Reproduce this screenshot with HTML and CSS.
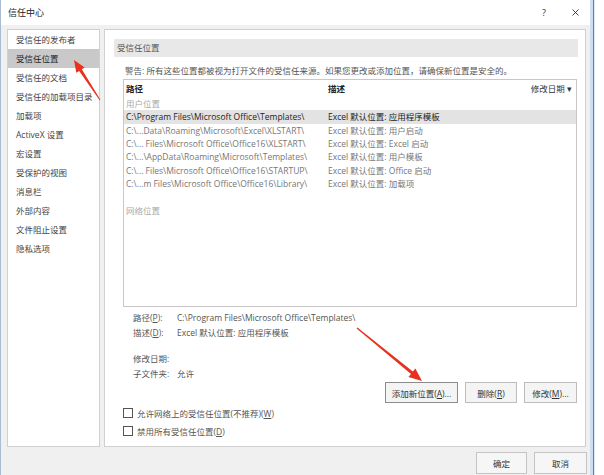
FILE: index.html
```html
<!DOCTYPE html>
<html lang="zh-CN">
<head>
  <meta charset="UTF-8" />
  <title>信任中心</title>
  <link rel="stylesheet" href="styles.css">
</head>
<body>
  <div class="page">
    <div class="dialog">
      <div class="titlebar">
        <span class="title">信任中心</span>
        <span class="help">?</span>
        <svg class="close" width="7" height="7" viewBox="0 0 7 7"><path d="M0.5 0.5L6.5 6.5M6.5 0.5L0.5 6.5" stroke="#333" stroke-width="0.9" fill="none"/></svg>
      </div>

      <div class="body">
        <div class="panes">
          <ul class="nav">
            <li>受信任的发布者</li>
            <li class="active">受信任位置</li>
            <li>受信任的文档</li>
            <li>受信任的加载项目录</li>
            <li>加载项</li>
            <li>ActiveX 设置</li>
            <li>宏设置</li>
            <li>受保护的视图</li>
            <li>消息栏</li>
            <li>外部内容</li>
            <li>文件阻止设置</li>
            <li>隐私选项</li>
          </ul>

          <div class="main">
            <div class="section-head">受信任位置</div>
            <div class="content">
              <p class="warn">警告: 所有这些位置都被视为打开文件的受信任来源。如果您更改或添加位置，请确保新位置是安全的。</p>

              <div class="list">
                <div class="list-head">
                  <span class="col-path">路径</span>
                  <span class="col-desc">描述</span>
                  <span class="col-date">修改日期 ▾</span>
                </div>
                <div class="group">用户位置</div>
                <div class="row selected"><span class="col-path">C:\Program Files\Microsoft Office\Templates\</span><span class="col-desc">Excel 默认位置: 应用程序模板</span></div>
                <div class="row"><span class="col-path">C:\...Data\Roaming\Microsoft\Excel\XLSTART\</span><span class="col-desc">Excel 默认位置: 用户启动</span></div>
                <div class="row"><span class="col-path">C:\... Files\Microsoft Office\Office16\XLSTART\</span><span class="col-desc">Excel 默认位置: Excel 启动</span></div>
                <div class="row"><span class="col-path">C:\...\AppData\Roaming\Microsoft\Templates\</span><span class="col-desc">Excel 默认位置: 用户模板</span></div>
                <div class="row"><span class="col-path">C:\... Files\Microsoft Office\Office16\STARTUP\</span><span class="col-desc">Excel 默认位置: Office 启动</span></div>
                <div class="row"><span class="col-path">C:\...m Files\Microsoft Office\Office16\Library\</span><span class="col-desc">Excel 默认位置: 加载项</span></div>
                <div class="row"></div>
                <div class="group">网络位置</div>
              </div>

              <div class="details">
                <div class="line"><span class="label">路径(<u>P</u>):</span><span>C:\Program Files\Microsoft Office\Templates\</span></div>
                <div class="line"><span class="label">描述(<u>D</u>):</span><span>Excel 默认位置: 应用程序模板</span></div>
                <div class="line spaced"><span class="label">修改日期:</span><span></span></div>
                <div class="line"><span class="label">子文件夹:</span><span>允许</span></div>
              </div>

              <div class="actions">
                <button class="btn primary w-add">添加新位置(<u>A</u>)...</button>
                <button class="btn w-del">删除(<u>R</u>)</button>
                <button class="btn w-mod">修改(<u>M</u>)...</button>
              </div>

              <label class="check"><span class="box"></span><span>允许网络上的受信任位置(不推荐)(<u>W</u>)</span></label>
              <label class="check"><span class="box"></span><span>禁用所有受信任位置(<u>D</u>)</span></label>
            </div>
          </div>
        </div>

        <div class="footer">
          <button class="btn w-ok">确定</button>
          <button class="btn w-cancel">取消</button>
        </div>
      </div>
    </div>
    <div class="edge"></div>
    <div class="rest"></div>

    <!-- red arrows drawn on top of the screenshot -->
    <svg class="marks" width="604" height="475" viewBox="0 0 604 475">
      <polygon fill="#e8321e" points="100.4,99.7 81.8,69.3 84.7,67.4 74,60 76.3,72.8 79.2,71 99.6,100.3"/>
      <polygon fill="#e8321e" points="357.4,327.5 412.85,371.6 415.4,368.5 422,381 408.4,377.1 410.95,374 356.6,328.5"/>
    </svg>
  </div>
</body>
</html>
```

FILE: styles.css
```css
* {
  box-sizing: border-box;
}
body {
  margin: 0;
  font-family: "Open Sans", "Noto Sans CJK SC", sans-serif;
  font-size: 8.5px;
  color: #333;
  background: #fff;
}
.page {
  position: relative;
  display: flex;
  width: 604px;
  height: 475px;
  overflow: hidden;
}
.dialog {
  width: 590px;
  display: flex;
  flex-direction: column;
  border-left: 1px solid #a9bcd2;
}
.titlebar {
  height: 25px;
  flex: none;
  display: flex;
  align-items: center;
  padding: 0 11px 0 7px;
  background: #fff;
}
.title {
  font-size: 9px;
  color: #222;
}
.help {
  margin-left: auto;
  font-size: 9px;
  color: #333;
}
.close {
  margin-left: 26px;
}
.body {
  flex: 1;
  display: flex;
  flex-direction: column;
  background: #f0f0f0;
}
.panes {
  display: flex;
  gap: 4px;
  height: 422px;
  padding: 4px 4px 0 6px;
}
.nav {
  list-style: none;
  margin: 0;
  padding: 0;
  width: 93px;
  background: #fff;
  border: 1px solid #d0d0d0;
}
.nav li {
  height: 19px;
  line-height: 19px;
  padding-left: 8px;
  color: #444;
  white-space: nowrap;
}
.nav li.active {
  background: #c9c9c9;
  color: #222;
}
.main {
  flex: 1;
  background: #fff;
  border: 1px solid #d0d0d0;
  padding: 9px 7px 0 9px;
}
.section-head {
  height: 18px;
  line-height: 18px;
  padding-left: 3px;
  background: #e8e8e8;
  color: #555;
}
.content {
  margin: 0 1px 0 9px;
}
.warn {
  margin: 8px 0 2px;
  padding-left: 2px;
  height: 12px;
  line-height: 12px;
  color: #555;
  white-space: nowrap;
}
.list {
  height: 228px;
  border: 1px solid #c8c8c8;
  background: #fff;
}
.list-head {
  display: flex;
  height: 17px;
  line-height: 17px;
  padding: 0 4px 0 2px;
  color: #222;
  font-weight: bold;
}
.col-path {
  width: 202px;
  flex: none;
  white-space: nowrap;
}
.col-desc {
  flex: 1;
  white-space: nowrap;
}
.list-head .col-date {
  font-weight: normal;
  color: #333;
}
.group {
  height: 13.33px;
  line-height: 13.33px;
  padding-left: 2px;
  color: #aaa;
}
.row {
  display: flex;
  height: 13.33px;
  line-height: 13.33px;
  padding-left: 2px;
  color: #777;
}
.row.selected {
  background: #e3e3e3;
  color: #222;
}
.details {
  margin-top: 3px;
  padding-left: 10px;
  color: #555;
}
.line {
  display: flex;
  height: 15px;
  line-height: 15px;
}
.line.spaced {
  margin-top: 11px;
}
.label {
  width: 44px;
  flex: none;
}
.actions {
  display: flex;
  justify-content: flex-end;
  gap: 7px;
  margin: 1px 0;
}
.btn {
  height: 21px;
  padding: 0;
  font: inherit;
  color: #333;
  background: #f4f4f4;
  border: 1px solid #bdbdbd;
}
.btn.primary {
  border-color: #8c8c8c;
}
.w-add { width: 73px; }
.w-del { width: 52px; }
.w-mod { width: 53px; }
.check {
  display: flex;
  align-items: center;
  gap: 4px;
  height: 18px;
  color: #555;
}
.box {
  width: 10px;
  height: 10px;
  border: 1px solid #555;
  background: #fff;
}
.footer {
  flex: 1;
  display: flex;
  justify-content: flex-end;
  gap: 7px;
  padding: 5px 3px 0 0;
}
.footer .btn {
  height: 22px;
  background: #f6f6f6;
  border-color: #c4c4c4;
}
.w-ok { width: 51px; }
.w-cancel { width: 53px; }
.edge {
  width: 5px;
  background: linear-gradient(to right, #cfdff0 0, #cfdff0 3px, #5f7fa6 3px, #5f7fa6 4px, #dbe7f3 4px);
}
.rest {
  flex: 1;
  background: #fff;
}
.marks {
  position: absolute;
  left: 0;
  top: 0;
  pointer-events: none;
}
```
